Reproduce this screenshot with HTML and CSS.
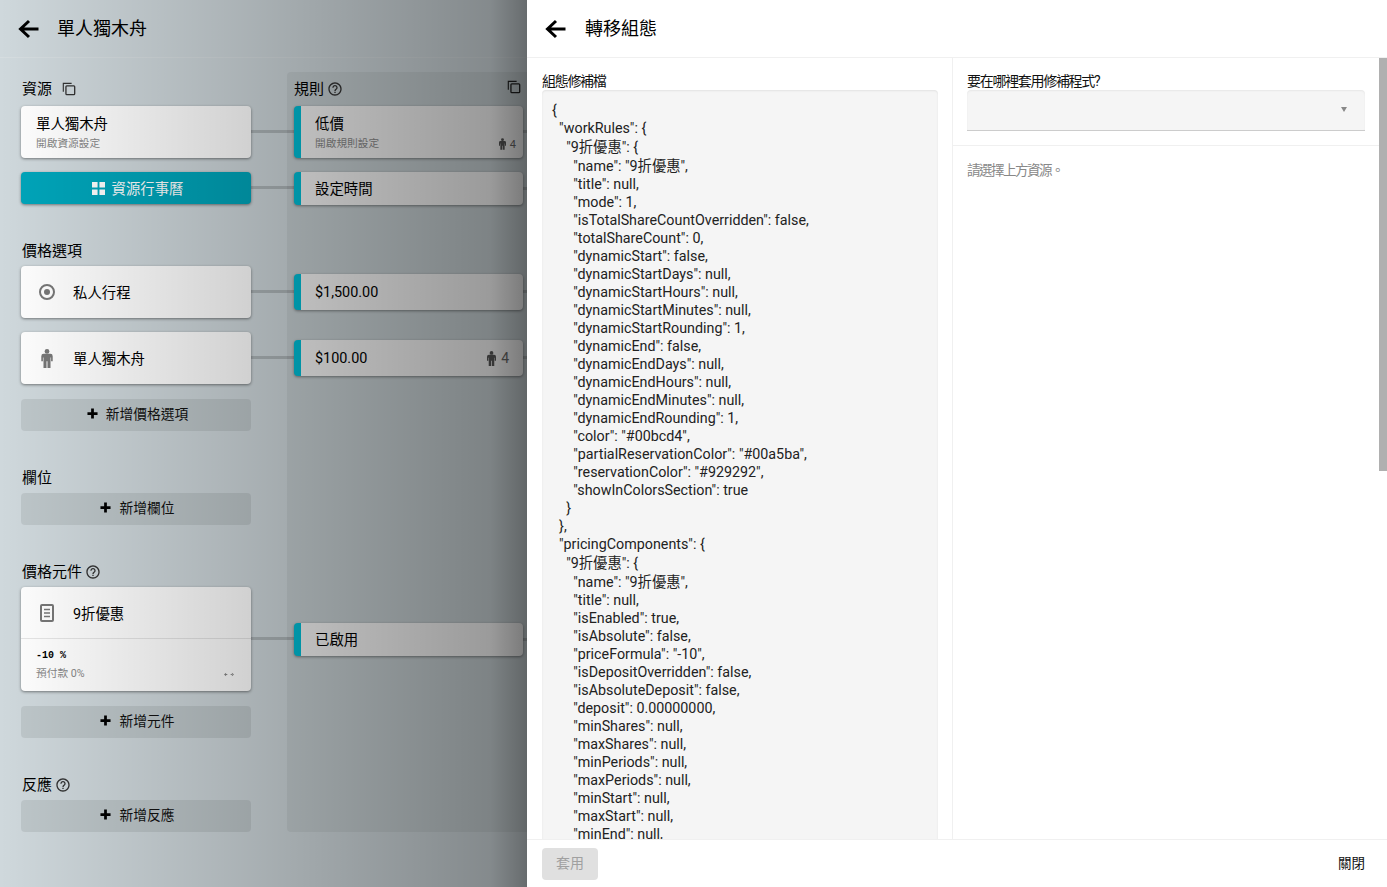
FILE: index.html
```html
<!DOCTYPE html>
<html lang="zh-Hant">
<head>
<meta charset="utf-8">
<title>轉移組態</title>
<link rel="stylesheet" href="styles.css">
</head>
<body>
<svg class="defs" width="0" height="0" aria-hidden="true">
  <defs>
    <symbol id="i-back" viewBox="0 0 22 20"><path d="M20.5 10H3M11 2 2.5 10l8.500 8" fill="none" stroke="currentColor" stroke-width="3"/></symbol>
    <symbol id="i-copy" viewBox="0 0 16 16"><path d="M1.500 11V1.500H11" fill="none" stroke="currentColor" stroke-width="1.300"/><rect x="4.500" y="4.500" width="10" height="10" rx="1" fill="none" stroke="currentColor" stroke-width="1.500"/></symbol>
    <symbol id="i-help" viewBox="0 0 24 24"><path fill="currentColor" d="M11 18h2v-2h-2v2zm1-16C6.480 2 2 6.480 2 12s4.480 10 10 10 10-4.480 10-10S17.520 2 12 2zm0 18c-4.410 0-8-3.590-8-8s3.590-8 8-8 8 3.590 8 8-3.590 8-8 8zm0-14c-2.210 0-4 1.790-4 4h2c0-1.100.9-2 2-2s2 .9 2 2c0 2-3 1.750-3 5h2c0-2.250 3-2.500 3-5 0-2.210-1.790-4-4-4z"/></symbol>
    <symbol id="i-person" viewBox="0 0 12 20"><circle cx="6" cy="2.500" r="2.500" fill="currentColor"/><path fill="currentColor" d="M2.500 5h7A2.500 2.500 0 0 1 12 7.500V13h-1.700V9h-.6v11H6.500v-7h-1v7H2.300V9h-.6v4H0V7.500A2.500 2.500 0 0 1 2.500 5z"/></symbol>
    <symbol id="i-plus" viewBox="0 0 12 12"><path d="M6 .5v11M.5 6h11" stroke="currentColor" stroke-width="3" fill="none"/></symbol>
  </defs>
</svg>
<div class="app">
  <section class="pane">
    <header class="bar">
      <svg class="back"><use href="#i-back"/></svg>
      <h1 class="title">單人獨木舟</h1>
    </header>
    <div class="board">
      <div class="col-left">
        <h2 class="head head-first">資源 <svg class="ic-copy"><use href="#i-copy"/></svg></h2>
        <div class="card card-two link">
          <div class="card-name">單人獨木舟</div>
          <div class="card-sub">開啟資源設定</div>
        </div>
        <div class="cal link">
          <svg class="ic-grid" viewBox="0 0 14 14"><path fill="currentColor" d="M0 0h6v6H0zM8 0h6v6H8zM0 8h6v6H0zM8 8h6v6H8z"/></svg>
          <span>資源行事曆</span>
        </div>

        <h2 class="head head-gap">價格選項</h2>
        <div class="card card-icon link">
          <svg class="lead" viewBox="0 0 24 24"><circle cx="12" cy="12" r="7" fill="none" stroke="currentColor" stroke-width="2"/><circle cx="12" cy="12" r="3" fill="currentColor"/></svg>
          <span class="card-name">私人行程</span>
        </div>
        <div class="card card-icon card-next link">
          <svg class="lead lead-person"><use href="#i-person"/></svg>
          <span class="card-name">單人獨木舟</span>
        </div>
        <div class="add add-after"><svg class="ic-plus"><use href="#i-plus"/></svg><span>新增價格選項</span></div>

        <h2 class="head head-gap">欄位</h2>
        <div class="add"><svg class="ic-plus"><use href="#i-plus"/></svg><span>新增欄位</span></div>

        <h2 class="head head-gap">價格元件 <svg class="ic-help"><use href="#i-help"/></svg></h2>
        <div class="card card-comp link-comp">
          <div class="comp-top">
            <svg class="lead" viewBox="0 0 24 24"><rect x="6" y="4" width="12" height="16" rx="1" fill="none" stroke="currentColor" stroke-width="2"/><path d="M9 8.500h6M9 12h6M9 15.500h6" stroke="currentColor" stroke-width="1.500"/></svg>
            <span class="card-name">9折優惠</span>
          </div>
          <div class="comp-bottom">
            <div class="mono">-10 %</div>
            <div class="comp-row">
              <span class="card-sub">預付款 0%</span>
              <svg class="ic-arrows" viewBox="0 0 12 6"><path d="M0 3l2.500-2v4zM12 3 9.500 1v4zM2 2.500h2v1H2zM8 2.500h2v1H8z" fill="currentColor"/></svg>
            </div>
          </div>
        </div>
        <div class="add add-after"><svg class="ic-plus"><use href="#i-plus"/></svg><span>新增元件</span></div>

        <h2 class="head head-gap">反應 <svg class="ic-help"><use href="#i-help"/></svg></h2>
        <div class="add"><svg class="ic-plus"><use href="#i-plus"/></svg><span>新增反應</span></div>
      </div>

      <div class="col-right">
        <svg class="ic-copy-right"><use href="#i-copy"/></svg>
        <h2 class="head head-rule">規則 <svg class="ic-help"><use href="#i-help"/></svg></h2>
        <div class="rule rule-two">
          <div class="card-name">低價</div>
          <div class="rule-line"><span class="card-sub">開啟規則設定</span><span class="share share-small"><svg class="ic-person-small"><use href="#i-person"/></svg>4</span></div>
        </div>
        <div class="rule rule-time"><span class="card-name">設定時間</span></div>
        <div class="rule rule-price rule-p1"><span class="card-name">$1,500.00</span></div>
        <div class="rule rule-price rule-p2"><span class="card-name">$100.00</span><span class="share"><svg class="ic-person-mid"><use href="#i-person"/></svg>4</span></div>
        <div class="rule rule-time rule-on"><span class="card-name">已啟用</span></div>
      </div>
    </div>
    <div class="scrim"></div>
  </section>

  <section class="drawer">
    <header class="bar bar-drawer">
      <svg class="back"><use href="#i-back"/></svg>
      <h1 class="title">轉移組態</h1>
    </header>
    <div class="drawer-body">
      <div class="json-col">
        <label class="field-label">組態修補檔</label>
<div class="json">{
  "workRules": {
<span class="tall">    "9折優惠": {</span><span class="tall">      "name": "9折優惠",</span>      "title": null,
      "mode": 1,
      "isTotalShareCountOverridden": false,
      "totalShareCount": 0,
      "dynamicStart": false,
      "dynamicStartDays": null,
      "dynamicStartHours": null,
      "dynamicStartMinutes": null,
      "dynamicStartRounding": 1,
      "dynamicEnd": false,
      "dynamicEndDays": null,
      "dynamicEndHours": null,
      "dynamicEndMinutes": null,
      "dynamicEndRounding": 1,
      "color": "#00bcd4",
      "partialReservationColor": "#00a5ba",
      "reservationColor": "#929292",
      "showInColorsSection": true
    }
  },
  "pricingComponents": {
<span class="tall">    "9折優惠": {</span><span class="tall">      "name": "9折優惠",</span>      "title": null,
      "isEnabled": true,
      "isAbsolute": false,
      "priceFormula": "-10",
      "isDepositOverridden": false,
      "isAbsoluteDeposit": false,
      "deposit": 0.00000000,
      "minShares": null,
      "maxShares": null,
      "minPeriods": null,
      "maxPeriods": null,
      "minStart": null,
      "maxStart": null,
      "minEnd": null,
</div>
      </div>
      <div class="target-col">
        <div class="target-top">
          <label class="field-label">要在哪裡套用修補程式?</label>
          <div class="select"><span class="caret"></span></div>
        </div>
        <p class="hint">請選擇上方資源<span class="hint-dot">。</span></p>
        <div class="thumb"></div>
      </div>
    </div>
    <footer class="foot">
      <button class="btn-apply" type="button" disabled>套用</button>
      <button class="btn-close" type="button">關閉</button>
    </footer>
  </section>
</div>
</body>
</html>
```
FILE: styles.css
```css
* { box-sizing: border-box; }
html, body { margin: 0; height: 100%; }
body {
  overflow: hidden;
  font-family: Roboto, "Noto Sans CJK TC", sans-serif;
  color: #000;
}
.defs { position: absolute; }
.app { display: flex; height: 887px; }

/* left pane */
.pane {
  position: relative;
  width: 527px;
  flex: none;
  overflow: hidden;
  background: #cfd8dc;
}
.scrim {
  position: absolute;
  inset: 0;
  background: linear-gradient(to right, rgba(0,0,0,0) 0, rgba(0,0,0,.18) 250px, rgba(0,0,0,.36) 490px, rgba(0,0,0,.5) 527px);
  pointer-events: none;
}
.bar {
  height: 58px;
  display: flex;
  align-items: center;
  padding-left: 18px;
  border-bottom: 1px solid #d6dde0;
}
.back { width: 22px; height: 20px; color: #000; flex: none; }
.title { margin: 0 0 0 17px; font-size: 18px; font-weight: 400; line-height: 24px; }
.board { display: flex; padding-left: 21px; }
.col-left { width: 230px; flex: none; }
.head {
  margin: 0;
  padding-left: 1px;
  font-size: 15px;
  font-weight: 400;
  line-height: 20px;
  height: 20px;
  display: flex;
  align-items: center;
  gap: 3px;
}
.head-first { margin-top: 21px; margin-bottom: 7px; }
.head-gap { margin-top: 37px; margin-bottom: 5px; }
.ic-copy { width: 14px; height: 14px; margin-left: 7px; color: #333; }
.ic-help { width: 16px; height: 16px; color: #333; }

.card {
  position: relative;
  background: #fff;
  border-radius: 4px;
  box-shadow: 0 1px 3px rgba(0,0,0,.45);
}
.card-two { height: 52px; padding: 10px 15px 0; }
.card-name { font-size: 14.400px; line-height: 18px; }
.card-sub { font-size: 10.700px; line-height: 16px; color: #888; }
.card-two .card-sub { display: block; margin-top: 2px; }
.link::after, .link-comp::after {
  content: "";
  position: absolute;
  left: 100%;
  top: 50%;
  width: 43px;
  height: 3px;
  margin-top: -2px;
  background: rgba(0,0,0,.16);
}
.link-comp::after { top: 51px; margin-top: -1px; }
.cal {
  position: relative;
  height: 32px;
  margin-top: 14px;
  padding-left: 3px;
  border-radius: 4px;
  background: #00a5ba;
  color: #fff;
  font-size: 14.400px;
  display: flex;
  align-items: center;
  justify-content: center;
  gap: 7px;
  box-shadow: 0 1px 3px rgba(0,0,0,.45);
}
.cal span { margin-bottom: 2px; }
.ic-grid { width: 13px; height: 13px; }
.card-icon {
  height: 52px;
  display: flex;
  align-items: center;
  padding-left: 14px;
}
.card-icon .card-name, .comp-top .card-name { margin-top: 4px; }
.card-next { margin-top: 14px; }
.lead { width: 24px; height: 24px; color: #777; flex: none; margin-right: 14px; }
.lead-person { height: 19px; }
.add {
  height: 32px;
  padding: 0 0 4px 3px;
  border-radius: 4px;
  background: rgba(0,0,0,.08);
  font-size: 13.750px;
  display: flex;
  align-items: center;
  justify-content: center;
  gap: 8px;
  color: #111;
}
.add-after { margin-top: 15px; }
.ic-plus { width: 11px; height: 11px; color: #000; }
.card-comp { height: 104px; }
.comp-top {
  height: 52px;
  display: flex;
  align-items: center;
  padding-left: 14px;
  border-bottom: 1px solid #e6e6e6;
}
.comp-bottom { padding: 10px 17px 0 15px; }
.mono { font-family: "Liberation Mono", monospace; font-size: 10px; font-weight: 700; line-height: 14px; }
.comp-row { display: flex; align-items: center; justify-content: space-between; margin-top: 3px; height: 16px; }
.ic-arrows { width: 10px; height: 5px; color: #888; }

/* right column */
.col-right {
  position: relative;
  flex: 1;
  margin-left: 36px;
  margin-top: 14px;
  height: 760px;
  padding: 7px 4px 0 7px;
  margin-right: -4px;
  background: rgba(0,0,0,.05);
  border-radius: 4px 0 0 4px;
}
.head-rule { margin-top: 0; margin-bottom: 7px; height: 20px; padding-left: 0; }
.ic-copy-right {
  position: absolute;
  right: 10px;
  top: 8px;
  width: 14px;
  height: 14px;
  color: #222;
}
.rule {
  position: relative;
  width: 229px;
  background: #f2f2f2;
  border-radius: 4px;
  border-left: 7px solid #00bcd4;
  padding-left: 14px;
  padding-right: 14px;
  box-shadow: 0 1px 3px rgba(0,0,0,.4);
}
.rule::before {
  content: "";
  position: absolute;
  left: 100%;
  top: 50%;
  width: 10px;
  height: 3px;
  margin-top: -2px;
  background: rgba(0,0,0,.16);
}
.rule-two { height: 52px; padding-top: 10px; padding-right: 7px; }
.rule-line { display: flex; justify-content: space-between; align-items: center; margin-top: 2px; }
.rule-time { height: 33px; margin-top: 14px; display: flex; align-items: center; }
.rule-time .card-name { margin-top: 3px; }
.rule-price { height: 36px; display: flex; align-items: center; justify-content: space-between; }
.rule-price .card-name { margin-top: 2px; }
.rule-p1 { margin-top: 69px; }
.rule-p2 { margin-top: 30px; }
.rule-on { margin-top: 247px; }
.share { display: inline-flex; align-items: center; gap: 5px; font-size: 14px; color: #666; }
.share-small { font-size: 11px; gap: 4px; }
.ic-person-small { width: 7px; height: 12px; color: #555; }
.ic-person-mid { width: 9px; height: 15px; color: #555; }

/* drawer */
.drawer {
  flex: 1;
  min-width: 0;
  background: #fff;
  display: flex;
  flex-direction: column;
}
.bar-drawer { padding-left: 18px; border-bottom-color: #f0f0f0; flex: none; }
.bar-drawer .title { margin-left: 18px; }
.drawer-body { flex: 1; min-height: 0; display: flex; overflow: hidden; }
.json-col {
  width: 426px;
  flex: none;
  padding: 15px 15px 0;
  border-right: 1px solid #f0f0f0;
}
.field-label { display: block; font-size: 14px; line-height: 17px; letter-spacing: -1.300px; color: #111; }
.json {
  height: 760px;
  width: 396px;
  margin: 0;
  padding: 11px 10px 0;
  white-space: pre;
  font-size: 14.300px;
  line-height: 18px;
  background: #f5f5f5;
  color: #222;
  border-radius: 4px 4px 0 0;
  box-shadow: inset 0 1px 2px rgba(0,0,0,.08);
  overflow: hidden;
}
.tall { display: block; padding-top: 1px; }
.target-col { position: relative; flex: 1; min-width: 0; }
.target-top {
  padding: 15px 14px 14px 14px;
  border-bottom: 1px solid #f0f0f0;
  margin-right: 8px;
}
.select {
  position: relative;
  height: 41px;
  background: #f5f5f5;
  border-bottom: 1px solid #ccc;
  border-radius: 4px 4px 0 0;
  box-shadow: inset 0 1px 2px rgba(0,0,0,.06);
}
.caret {
  position: absolute;
  right: 18px;
  top: 17px;
  border-left: 3px solid transparent;
  border-right: 3px solid transparent;
  border-top: 5px solid #888;
}
.hint { margin: 14px 0 0 14px; font-size: 13.500px; letter-spacing: -1.500px; line-height: 18px; color: #888; }
.hint-dot { font-family: "Noto Sans CJK SC", sans-serif; }
.thumb {
  position: absolute;
  right: 0;
  top: 0;
  width: 8px;
  height: 413px;
  background: #b0b0b0;
}
.foot {
  height: 48px;
  flex: none;
  display: flex;
  align-items: center;
  justify-content: space-between;
  padding: 0 22px 0 15px;
  border-top: 1px solid #f0f0f0;
}
.btn-apply {
  width: 56px;
  height: 32px;
  padding: 0 0 3px;
  border: 0;
  border-radius: 4px;
  background: #e0e0e0;
  color: #a0a0a0;
  font: inherit;
  font-size: 14px;
}
.btn-close {
  border: 0;
  padding: 0 0 4px;
  background: none;
  color: #111;
  font: inherit;
  font-size: 13.500px;
}
```
